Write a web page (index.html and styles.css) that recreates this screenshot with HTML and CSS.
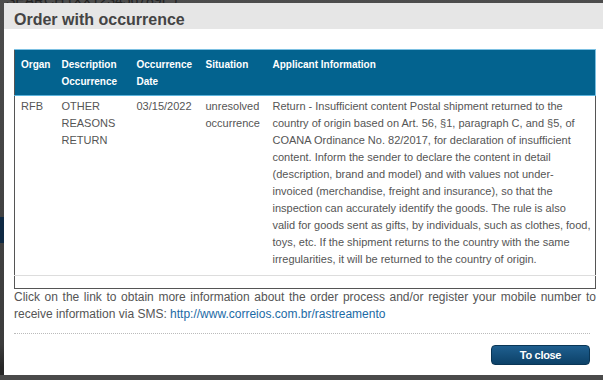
FILE: index.html
```html
<!DOCTYPE html>
<html lang="en">
<head>
  <meta charset="UTF-8" />
  <meta name="viewport" content="width=device-width, initial-scale=1.0" />
  <title>Order with occurrence</title>
  <link rel="stylesheet" href="styles.css">
</head>
<body>
  <div class="backdrop">
    <div class="search-label">SEARCH (XX123456789L )</div>
    <div class="side-bar"></div>
  </div>
  <div class="dialog">
    <div class="dialog-title">
      <h1>Order with occurrence</h1>
    </div>
    <div class="dialog-body">
      <table class="events">
        <colgroup>
          <col class="c-organ" />
          <col class="c-desc" />
          <col class="c-date" />
          <col class="c-sit" />
          <col />
        </colgroup>
        <thead>
          <tr>
            <th>Organ</th>
            <th>Description Occurrence</th>
            <th>Occurrence Date</th>
            <th>Situation</th>
            <th>Applicant Information</th>
          </tr>
        </thead>
        <tbody>
          <tr>
            <td>RFB</td>
            <td>OTHER REASONS RETURN</td>
            <td>03/15/2022</td>
            <td>unresolved occurrence</td>
            <td>Return - Insufficient content Postal shipment returned to the country of origin based on Art. 56, §1, paragraph C, and §5, of COANA Ordinance No. 82/2017, for declaration of insufficient content. Inform the sender to declare the content in detail (description, brand and model) and with values not under-invoiced (merchandise, freight and insurance), so that the inspection can accurately identify the goods. The rule is also valid for goods sent as gifts, by individuals, such as clothes, food, toys, etc. If the shipment returns to the country with the same irregularities, it will be returned to the country of origin.</td>
          </tr>
          <tr class="empty-row">
            <td colspan="5"></td>
          </tr>
        </tbody>
      </table>
      <p class="note">Click on the link to obtain more information about the order process and/or register your mobile number to receive information via SMS: <a href="#">http://www.correios.com.br/rastreamento</a></p>
      <div class="actions">
        <button type="button" class="btn-close">To close</button>
      </div>
    </div>
  </div>
</body>
</html>
```

FILE: styles.css
```css
* {
  box-sizing: border-box;
}
html, body {
  height: 100%;
}
body {
  margin: 0;
  overflow: hidden;
  font-family: "Liberation Sans", Arial, sans-serif;
  background: #4a4a4a;
  color: #555;
}
.backdrop {
  height: 100%;
  background: linear-gradient(#4d4d4d, #3c3c3c 92%, #262626 98%);
}
.search-label {
  font-size: 14px;
  color: #222;
  padding-left: 6px;
  line-height: 10px;
  margin-top: -5px;
}
.side-bar {
  margin-top: 212px;
  width: 5px;
  height: 26px;
  background: #0f2a44;
}
.dialog {
  position: absolute;
  left: 4px;
  top: 3px;
  width: 610px;
  height: 372px;
  background: #fff;
}
.dialog-title {
  height: 26px;
  padding: 9px 10px 0;
  background: #e6e6e6;
}
.dialog-title h1 {
  margin: 0;
  font-size: 16px;
  line-height: 16px;
  font-weight: bold;
  color: #444;
}
.dialog-body {
  width: 602px;
  padding: 20px 10px 0;
}
.events {
  width: 582px;
  border-collapse: collapse;
  table-layout: fixed;
  border: 1px solid #555;
  font-size: 11px;
  line-height: 17px;
}
.c-organ { width: 41px; }
.c-desc { width: 75px; }
.c-date { width: 69px; }
.c-sit { width: 67px; }
.events th {
  background: #03638f;
  color: #fff;
  font-size: 10px;
  font-weight: bold;
  text-align: left;
  vertical-align: top;
  padding: 6px 4px 5px 6px;
  border-top: 1px solid #7cc0e2;
  border-bottom: 1px solid #5db4dc;
}
.events th:last-child {
  border-right: 1px solid #7cc0e2;
}
.events td {
  vertical-align: top;
  padding: 2px 4px 7px 6px;
  color: #555;
}
.events .empty-row td {
  height: 13px;
  padding: 0;
  border-top: 1px solid #ddd;
}
.note {
  margin: 0;
  font-size: 12px;
  line-height: 17px;
  text-align: justify;
  color: #555;
}
.note a {
  color: #1b6aa5;
  text-decoration: none;
}
.actions {
  margin: 10px 6px 0 0;
  padding-top: 11px;
  border-top: 1px dotted #bbb;
  display: flex;
  justify-content: flex-end;
}
.btn-close {
  width: 99px;
  height: 20px;
  border: 1px solid #0a3656;
  border-radius: 4px;
  background: linear-gradient(#1f5f8f, #0c4168);
  color: #fff;
  font-family: "Liberation Sans", Arial, sans-serif;
  font-size: 11px;
  font-weight: bold;
  letter-spacing: -0.3px;
  padding: 0;
}
```
